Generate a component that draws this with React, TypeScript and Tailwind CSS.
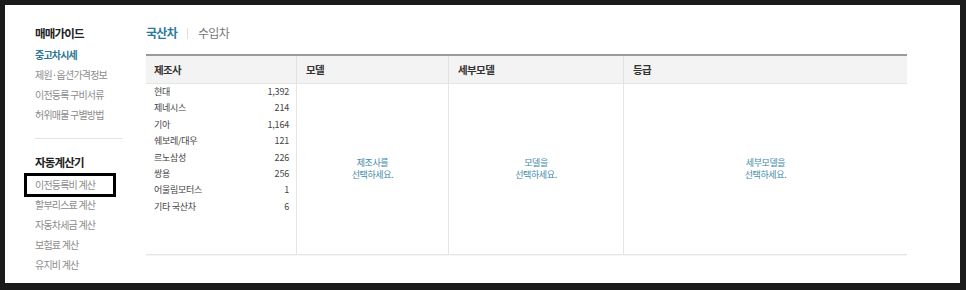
const font = "font-['Noto_Sans_CJK_KR','Noto_Sans',sans-serif]";

const guideLinks = ["제원·옵션가격정보", "이전등록 구비서류", "허위매물 구별방법"];
const calcLinks = ["이전등록비 계산", "할부리스료 계산", "자동차세금 계산", "보험료 계산", "유지비 계산"];

const makers = [
  { name: "현대", count: "1,392" },
  { name: "제네시스", count: "214" },
  { name: "기아", count: "1,164" },
  { name: "쉐보레/대우", count: "121" },
  { name: "르노삼성", count: "226" },
  { name: "쌍용", count: "256" },
  { name: "어울림모터스", count: "1" },
  { name: "기타 국산차", count: "6" },
];

const Placeholder = ({ lines }: { lines: string[] }) => (
  <div className="flex h-full flex-col items-center justify-center text-center text-[9px] leading-[12px] tracking-[-0.4px] text-[#3f8aa8]">
    {lines.map((l) => (
      <span key={l}>{l}</span>
    ))}
  </div>
);

const App = () => {
  return (
    <div className={`h-[290px] w-[966px] bg-[#1b1b1b] pt-[5px] pl-[5px] pr-[6px] pb-[7px] ${font}`}>
      <div className="flex h-full bg-white">
        {/* sidebar */}
        <aside className="w-[141px] shrink-0 pt-[18px] pl-[30px]">
          <h3 className="text-[11.5px] font-bold leading-[20px] tracking-[-0.8px] text-[#222]">매매가이드</h3>
          <ul className="mt-[2px]">
            <li className="text-[10px] font-bold leading-[20px] tracking-[-0.8px] text-[#2b7896]">중고차시세</li>
            {guideLinks.map((l) => (
              <li key={l} className="text-[10px] leading-[20px] tracking-[-0.8px] text-[#8c8c8c]">
                {l}
              </li>
            ))}
          </ul>
          <div className="mt-[13px] h-px w-[88px] bg-[#e3e3e3]" />
          <h3 className="mt-[13px] text-[11.5px] font-bold leading-[20px] tracking-[-0.8px] text-[#222]">자동계산기</h3>
          <ul className="mt-[3px]">
            {calcLinks.map((l, i) => (
              <li key={l} className="relative text-[10px] leading-[20px] tracking-[-0.8px] text-[#8c8c8c]">
                {l}
                {i === 0 && (
                  <span className="absolute left-[-11px] top-[-2px] h-[24px] w-[92px] border-[3px] border-black" />
                )}
              </li>
            ))}
          </ul>
        </aside>

        {/* main */}
        <main className="w-[761px] shrink-0 pt-[17px]">
          <div className="flex h-[22px] items-center">
            <span className="text-[12px] font-bold tracking-[-0.7px] text-[#2a7a9b]">국산차</span>
            <span className="mx-[10px] h-[11px] w-px bg-[#e0e0e0]" />
            <span className="text-[12px] tracking-[-0.7px] text-[#777]">수입차</span>
          </div>

          <div className="mt-[10px] border-t-2 border-[#9a9a9a] border-b border-b-[#e6e6e6] shadow-[0_1px_1px_rgba(0,0,0,0.04)]">
            <div className="grid h-[28px] grid-cols-[151px_152px_175px_1fr] border-b border-[#e6e6e6] bg-[#f3f3f3] text-[10.5px] font-bold tracking-[-0.6px] text-[#333]">
              <div className="flex items-center border-r border-[#e2e2e2] pl-[8px]">제조사</div>
              <div className="flex items-center border-r border-[#e2e2e2] pl-[9px]">모델</div>
              <div className="flex items-center border-r border-[#e2e2e2] pl-[9px]">세부모델</div>
              <div className="flex items-center pl-[9px]">등급</div>
            </div>
            <div className="grid h-[170px] grid-cols-[151px_152px_175px_1fr]">
              <ul className="border-r border-[#e6e6e6] pl-[8px] pr-[7px]">
                {makers.map((m) => (
                  <li key={m.name} className="flex justify-between text-[9px] leading-[16.4px] tracking-[-0.3px] text-[#444]">
                    <span>{m.name}</span>
                    <span className="tracking-[-0.2px]">{m.count}</span>
                  </li>
                ))}
              </ul>
              <div className="border-r border-[#e6e6e6]">
                <Placeholder lines={["제조사를", "선택하세요."]} />
              </div>
              <div className="border-r border-[#e6e6e6]">
                <Placeholder lines={["모델을", "선택하세요."]} />
              </div>
              <div>
                <Placeholder lines={["세부모델을", "선택하세요."]} />
              </div>
            </div>
          </div>
        </main>
      </div>
    </div>
  );
};

export default App;
